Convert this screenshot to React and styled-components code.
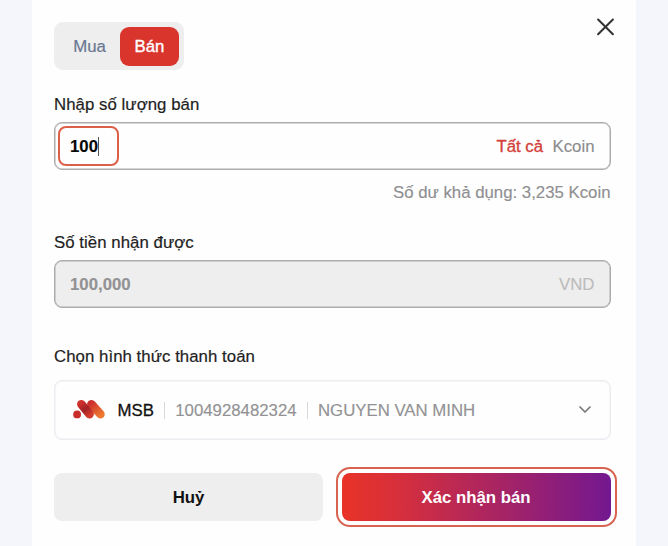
import React from "react";
import styled, { createGlobalStyle } from "styled-components";

const GlobalStyle = createGlobalStyle`
  *, *::before, *::after { box-sizing: border-box; }
  body {
    margin: 0;
    background: #f4f6fb;
    font-family: "Liberation Sans", Arial, sans-serif;
    font-size: 16.8px;
    color: #1f1f1f;
  }
  button, input { font: inherit; }
`;

const Page = styled.div`
  height: 546px;
  padding: 0 32px 0 31.5px;
  overflow: hidden;
`;

const Dialog = styled.main`
  height: 546px;
  padding: 22px 25.5px 0 22.5px;
  background: #fefefe;
`;

const Header = styled.header`
  display: flex;
  justify-content: space-between;
  align-items: flex-start;
  height: 72px;
`;

const Tabs = styled.div`
  display: flex;
  width: 130px;
  height: 48px;
  padding: 5px 5px 4px;
  border-radius: 9px;
  background: #eeeeee;
`;

const Tab = styled.button`
  width: ${(p) => (p.$active ? 59 : 61)}px;
  height: 39px;
  padding: 1px 0 0;
  border: 0;
  border-radius: 9px;
  background: ${(p) => (p.$active ? "#d9352d" : "transparent")};
  color: ${(p) => (p.$active ? "#fff" : "#697791")};
  -webkit-text-stroke: ${(p) => (p.$active ? 0.35 : 0.2)}px;
`;

const CloseButton = styled.button`
  display: flex;
  width: 18px;
  height: 18px;
  margin: -4px -4px 0 0;
  padding: 0;
  border: 0;
  background: none;
`;

const Text = styled.span`
  display: inline-block;
  padding-top: 1px;
  line-height: 19px;
  white-space: pre;
  color: ${(p) => p.$color || "inherit"};
  font-weight: ${(p) => (p.$bold ? 700 : 400)};
  -webkit-text-stroke: ${(p) => p.$stroke || 0.15}px;
`;

const Label = styled.label`
  display: block;
  height: 28px;
  line-height: 22px;
  letter-spacing: 0.05px;
  -webkit-text-stroke: 0.2px;
`;

const Field = styled.div`
  display: flex;
  align-items: center;
  justify-content: space-between;
  height: 48px;
  padding: 0 15px 0 3px;
  border: 1px solid #acacac;
  box-shadow: inset 0 0 0 0.5px #acacac;
  border-radius: 8px;
  background: ${(p) => (p.$disabled ? "#eeeeee" : "#fefefe")};
`;

const Amount = styled.div`
  display: flex;
  align-items: center;
  width: ${(p) => (p.$marked ? "60.5px" : "auto")};
  height: 40px;
  padding-left: ${(p) => (p.$marked ? 10 : 12)}px;
  border: ${(p) => (p.$marked ? "2px solid #dc6048" : "0")};
  border-radius: 8px;
`;

const Caret = styled.i`
  width: 1px;
  height: 19px;
  margin-left: -0.5px;
  background: #555;
`;

const Suffix = styled.div`
  display: flex;
  gap: 9.5px;
`;

const Balance = styled.div`
  height: 62px;
  padding-top: 12px;
  line-height: 21px;
  text-align: right;
`;

const Account = styled.div`
  display: flex;
  align-items: center;
  height: 60px;
  margin: 6px 0 33px;
  padding: 0 17.5px;
  border: 1px solid #eaecf0;
  box-shadow: inset 0 0 0 0.5px #eaecf0;
  border-radius: 8px;
`;

const BankLogo = styled.svg`
  flex: none;
  width: 33px;
  height: 21px;
  margin: 0 12px 1px 0;
`;

const Divider = styled.i`
  width: 1px;
  height: 17px;
  margin: 0 10.2px;
  background: #d8d8d8;
`;

const Chevron = styled.svg`
  width: 14px;
  height: 10px;
  margin-left: auto;
`;

const Actions = styled.footer`
  display: flex;
  justify-content: space-between;
`;

const Button = styled.button`
  width: 269px;
  height: 48px;
  padding: 2px 0 0;
  border: 0;
  border-radius: 8px;
  font-weight: 700;
  color: ${(p) => (p.$primary ? "#fff" : "#111")};
  background: ${(p) =>
    p.$primary ? "linear-gradient(90deg, #e93327 0%, #d52f3d 22%, #731890 100%)" : "#eeeeee"};
  outline: ${(p) => (p.$primary ? "2px solid #d76350" : "none")};
  outline-offset: 4px;
`;

const Spacer = styled.div`
  height: 38px;
`;

export default function App() {
  return (
    <>
      <GlobalStyle />
      <Page>
        <Dialog>
          <Header>
            <Tabs>
              <Tab>Mua</Tab>
              <Tab $active>Bán</Tab>
            </Tabs>
            <CloseButton aria-label="Đóng">
              <svg width="18" height="18" viewBox="0 0 18 18" fill="none" stroke="#333" strokeWidth="2" strokeLinecap="round">
                <path d="M1.1 1.5 15.9 16.3M15.9 1.5 1.1 16.3" />
              </svg>
            </CloseButton>
          </Header>
          <Label>Nhập số lượng bán</Label>
          <Field>
            <Amount $marked>
              <Text $bold $color="#080808">100</Text>
              <Caret />
            </Amount>
            <Suffix>
              <Text $color="#d33f3b" $stroke={0.35}>Tất cả</Text>
              <Text $color="#8c8c8e">Kcoin</Text>
            </Suffix>
          </Field>
          <Balance>
            <Text $color="#8f8f91">Số dư khả dụng: 3,235 Kcoin</Text>
          </Balance>
          <Label>Số tiền nhận được</Label>
          <Field $disabled>
            <Amount>
              <Text $bold $color="#929294">100,000</Text>
            </Amount>
            <Text $color="#bcbcbc">VND</Text>
          </Field>
          <Spacer />
          <Label>Chọn hình thức thanh toán</Label>
          <Account>
            <BankLogo viewBox="0 0 33 21" fill="none" strokeLinecap="round">
              <defs>
                <linearGradient id="stem" gradientUnits="userSpaceOnUse" x1="8" y1="4" x2="17" y2="16">
                  <stop stopColor="#ce302b" />
                  <stop offset=".5" stopColor="#9f2327" />
                  <stop offset="1" stopColor="#d33a2c" />
                </linearGradient>
                <linearGradient id="arm" gradientUnits="userSpaceOnUse" x1="18" y1="4" x2="28" y2="16">
                  <stop stopColor="#cc302c" />
                  <stop offset="1" stopColor="#ee7830" />
                </linearGradient>
              </defs>
              <circle cx="4.1" cy="15.4" r="3.9" fill="#c92d2b" />
              <path d="m18.4 5.2 9 10" stroke="url(#arm)" strokeWidth="8.6" />
              <path d="M8.4 5.2 16.6 15.2" stroke="url(#stem)" strokeWidth="8.6" />
            </BankLogo>
            <Text $color="#111" $stroke={0.3}>MSB</Text>
            <Divider />
            <Text $color="#929294">1004928482324</Text>
            <Divider />
            <Text $color="#929294">NGUYEN VAN MINH</Text>
            <Chevron viewBox="0 0 14 10" fill="none" stroke="#777" strokeWidth="1.7" strokeLinecap="round" strokeLinejoin="round">
              <path d="m2 2 5 5 5-5" />
            </Chevron>
          </Account>
          <Actions>
            <Button>Huỷ</Button>
            <Button $primary>Xác nhận bán</Button>
          </Actions>
        </Dialog>
      </Page>
    </>
  );
}
